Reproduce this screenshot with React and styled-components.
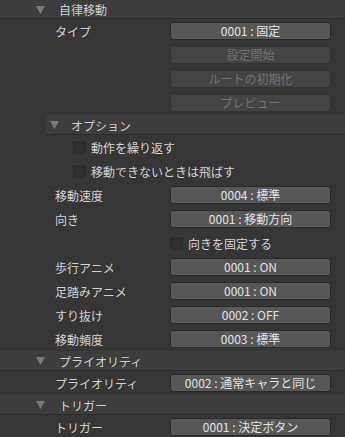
import React from "react";
import styled, { createGlobalStyle } from "styled-components";

const Global = createGlobalStyle`
  html, body { margin: 0; padding: 0; background: #363636; }
  body { font-family: "Noto Sans CJK JP", "Noto Sans", sans-serif; font-size: 12px; color: #d4d4d4; }
`;

const Panel = styled.div`
  width: 345px;
  height: 437px;
  overflow: hidden;
  background: #363636;
  display: flex;
  flex-direction: column;
`;

const Header = styled.div`
  height: ${(p) => p.$h || 19}px;
  box-sizing: border-box;
  margin-left: ${(p) => p.$indent}px;
  display: flex;
  align-items: center;
  background: #3d3d3d;
  border-top: 1px solid ${(p) => (p.$top ? "#2c2c2c" : "transparent")};
  border-bottom: 1px solid #2a2a2a;
  padding-left: ${(p) => p.$tri}px;
  color: #cfcfcf;
  flex: none;
`;

const Tri = styled.svg`
  width: 9px;
  height: 8px;
  margin-right: ${(p) => p.$gap}px;
  flex: none;
`;

const Row = styled.div`
  height: ${(p) => p.$h || 24}px;
  display: flex;
  align-items: center;
  padding-left: ${(p) => p.$indent}px;
  flex: none;
`;

const Label = styled.div`
  width: ${(p) => p.$w}px;
  color: #d2d2d2;
  white-space: nowrap;
`;

const Btn = styled.div`
  width: 161px;
  height: 18px;
  box-sizing: border-box;
  border-radius: 3px;
  border: 1px solid ${(p) => (p.$disabled ? "#343434" : "#2a2a2a")};
  background: ${(p) => (p.$disabled ? "#444444" : "#575757")};
  color: ${(p) => (p.$disabled ? "#737373" : "#e2e2e2")};
  display: flex;
  align-items: center;
  justify-content: center;
  line-height: 1;
  white-space: nowrap;
`;

const Box = styled.div`
  width: 13px;
  height: 13px;
  box-sizing: border-box;
  border-radius: 2px;
  background: #2f2f2f;
  border: 1px solid #2b2b2b;
  margin-right: ${(p) => p.$gap}px;
  flex: none;
`;

const Triangle = ({ gap }) => (
  <Tri $gap={gap} viewBox="0 0 9 8">
    <polygon points="0,0 9,0 4.5,8" fill="#7a7a7a" />
  </Tri>
);

const SectionHeader = ({ indent, tri, gap, top, h, children }) => (
  <Header $indent={indent} $tri={tri} $top={top} $h={h}>
    <Triangle gap={gap} />
    {children}
  </Header>
);

const Field = ({ label, value, disabled }) => (
  <Row $indent={55}>
    <Label $w={115}>{label}</Label>
    <Btn $disabled={disabled}>{value}</Btn>
  </Row>
);

const Check = ({ indent, label, h }) => (
  <Row $indent={indent} $h={h}>
    <Box $gap={5} />
    <span>{label}</span>
  </Row>
);

export default function App() {
  return (
    <>
      <Global />
      <Panel>
        <SectionHeader indent={0} tri={36} gap={14} h={19}>自律移動</SectionHeader>
        <Field label="タイプ" value="0001 : 固定" />
        <Field label="" value="設定開始" disabled />
        <Field label="" value="ルートの初期化" disabled />
        <Field label="" value="プレビュー" disabled />
        <SectionHeader indent={46} tri={4} gap={12} h={20}>オプション</SectionHeader>
        <Check indent={73} label="動作を繰り返す" />
        <Check indent={73} label="移動できないときは飛ばす" />
        <Field label="移動速度" value="0004 : 標準" />
        <Field label="向き" value="0001 : 移動方向" />
        <Check indent={170} label="向きを固定する" />
        <Field label="歩行アニメ" value="0001 : ON" />
        <Field label="足踏みアニメ" value="0001 : ON" />
        <Field label="すり抜け" value="0002 : OFF" />
        <Field label="移動頻度" value="0003 : 標準" />
        <SectionHeader indent={0} tri={36} gap={14} h={20}>プライオリティ</SectionHeader>
        <Field label="プライオリティ" value="0002 : 通常キャラと同じ" />
        <SectionHeader indent={0} tri={36} gap={14} h={20}>トリガー</SectionHeader>
        <Field label="トリガー" value="0001 : 決定ボタン" />
      </Panel>
    </>
  );
}
